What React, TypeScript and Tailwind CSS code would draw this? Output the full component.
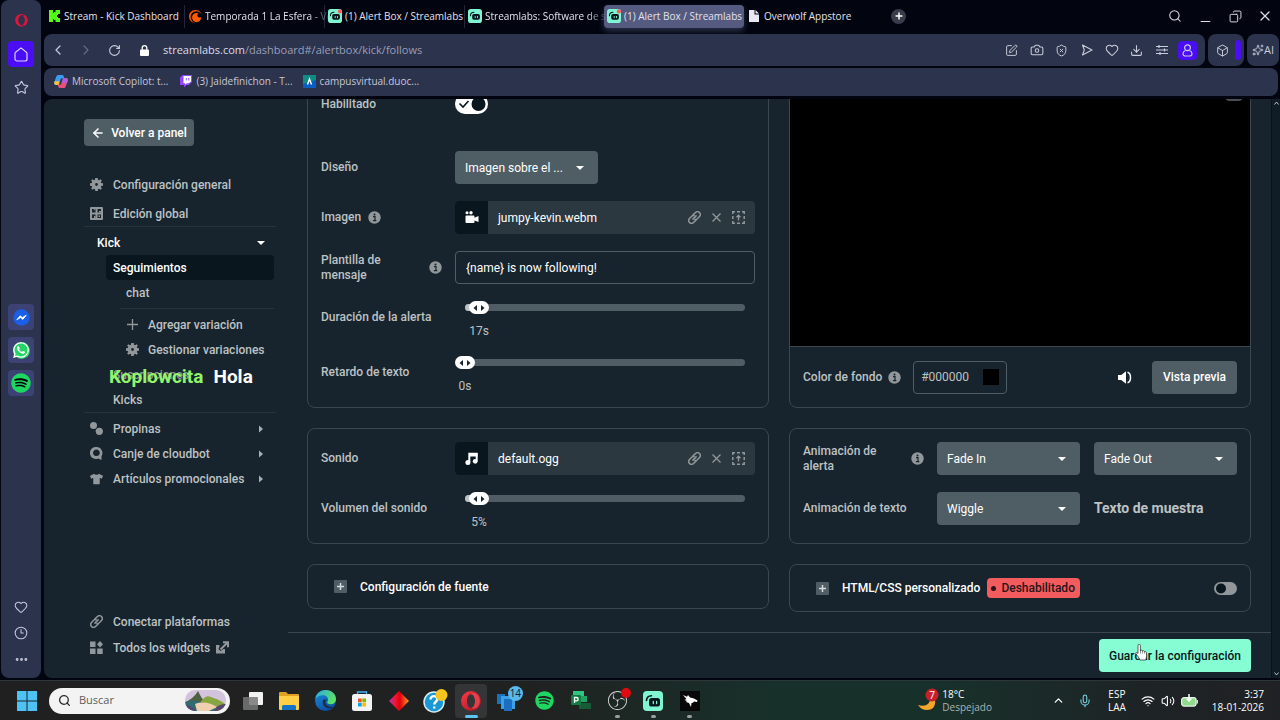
import { useState } from "react";
import type { ReactNode } from "react";
import {
  ArrowLeft, Box, Camera, ChevronLeft, ChevronRight, ChevronUp, Clock3, Copy, Download, Ellipsis,
  Heart, Mic, Minus, Plus, RotateCw, Search, ShieldX, Sparkles, SquarePen,
  Star, Volume2, Wifi, X,
} from "lucide-react";
import { FaOpera, FaSpotify, FaTshirt, FaWhatsapp } from "react-icons/fa";
import { SiCrunchyroll, SiObsstudio } from "react-icons/si";

/* ---------- drawings ---------- */

function StreamlabsLogo({ size, dot }: { size: number; dot?: boolean }) {
  return (
    <svg width={size} height={size} viewBox="0 0 20 20" className="shrink-0">
      <rect width="20" height="20" rx="4" fill="#80f5d2" />
      <path d="M3.500 9.500C3.600 6.500 5.500 4.800 8.500 4.700" fill="none" stroke="#09161d" strokeWidth="1.600" strokeLinecap="round" />
      <rect x="6" y="7" width="11" height="8.500" rx="2.600" fill="#09161d" />
      <path d="M10.300 10.500v2M13.600 10.500v2" stroke="#80f5d2" strokeWidth="1.300" strokeLinecap="round" />
      {dot && <circle cx="17" cy="3.500" r="3" fill="#ff5a5f" />}
    </svg>
  );
}

function KickLogo() {
  return (
    <svg width="11" height="12" viewBox="0 0 11 12" className="shrink-0">
      <path d="M0 0h4v3h1V2h1.500V0H11v4H9v1H8v2h1v1h2v4H6.500v-2H5V9H4v3H0z" fill="#53fc18" />
    </svg>
  );
}

function HomeIcon() {
  return (
    <svg width="14" height="15" viewBox="0 0 14 15" fill="none" stroke="currentColor" strokeWidth="1.200" strokeLinejoin="round">
      <path d="M7 .9 12.400 5.200a1.500 1.500 0 0 1 .6 1.200V12a2 2 0 0 1-2 2H3a2 2 0 0 1-2-2V6.400a1.500 1.500 0 0 1 .6-1.200z" />
    </svg>
  );
}

function PersonIcon() {
  return (
    <svg width="11" height="13" viewBox="0 0 11 13" fill="none" stroke="currentColor" strokeWidth="1.200">
      <circle cx="5.500" cy="3.800" r="2.900" />
      <path d="M3.500 6.500C1.800 7.200 1 8.500 1 9.800 1 11.300 2 12 3.300 12h4.400C9 12 10 11.300 10 9.800c0-1.300-.8-2.600-2.500-3.300" />
    </svg>
  );
}

function GearIcon() {
  return (
    <svg width="13" height="13" viewBox="0 0 16 16">
      <path
        fillRule="evenodd"
        fill="currentColor"
        d="M6.500 0h3l.4 2.200 1.200.5L13 1.400 14.600 3l-1.300 1.900.5 1.200 2.200.4v3l-2.200.4-.5 1.200 1.300 1.900-1.600 1.600-1.900-1.300-1.200.5L9.500 16h-3l-.4-2.200-1.200-.5L3 14.600 1.400 13l1.300-1.900-.5-1.200L0 9.500v-3l2.200-.4.5-1.200L1.400 3 3 1.400l1.900 1.300 1.200-.5zM8 6.300a1.700 1.700 0 1 0 0 3.400 1.700 1.700 0 0 0 0-3.400z"
      />
    </svg>
  );
}

function GlobalEditIcon() {
  return (
    <svg width="13" height="13" viewBox="0 0 13 13">
      <path
        fillRule="evenodd"
        fill="currentColor"
        d="M1 0h11a1 1 0 0 1 1 1v11a1 1 0 0 1-1 1H1a1 1 0 0 1-1-1V1a1 1 0 0 1 1-1zM2 2v3.500h3.500V2zM7.500 2v3.500H11V2zM2 7.500V11h3.500V7.500zM7.500 7.500V11H11V7.500z"
      />
      <path d="M3.500 2h1.500v1.500zM9 4h2v1.500H9zM4 9h1.500v2H4zM8.500 8.500H10V10H8.500z" fill="currentColor" />
    </svg>
  );
}

function CoinsIcon() {
  return (
    <svg width="13" height="13" viewBox="0 0 13 13">
      <circle cx="3.500" cy="3.500" r="3.500" fill="currentColor" />
      <circle cx="9.300" cy="9.300" r="3.600" fill="currentColor" />
    </svg>
  );
}

function CloudbotIcon() {
  return (
    <svg width="13" height="13" viewBox="0 0 13 13">
      <path fillRule="evenodd" fill="currentColor" d="M6.500 0a6 6 0 0 1 5 9.200V13L8.300 11.500A6 6 0 1 1 6.500 0zM6.400 2.600A3.300 3.300 0 0 0 4 8.200c.7.800 3.800 1 4.800 0a3.300 3.300 0 0 0-2.400-5.600z" />
    </svg>
  );
}

function LinkIcon() {
  return (
    <svg width="13" height="13" viewBox="0 0 13 13" fill="none" stroke="currentColor" strokeWidth="1.500" strokeLinecap="round">
      <path d="M4.900 8.100 8.100 4.900" />
      <path d="M5 3.900 7.500 1.500a2.830 2.830 0 0 1 4 4L9.300 7.700a2.700 2.700 0 0 1-2.300.7" />
      <path d="M8 9.100 5.500 11.500a2.830 2.830 0 0 1-4-4L3.700 5.300A2.700 2.700 0 0 1 6 4.600" />
    </svg>
  );
}

function WidgetsIcon() {
  return (
    <svg width="13" height="13" viewBox="0 0 13 13" fill="currentColor">
      <path d="M0 .5h5.500V6H0zM0 7.500h5.500V13H0zM7.200 7.500h5.500V13H7.200zM10 0l3 3.200-3 3.200-3-3.200z" />
    </svg>
  );
}

function ExternalIcon() {
  return (
    <svg width="13" height="13" viewBox="0 0 13 13">
      <path d="M0 4h3.500v1.500L2.500 8l2 2 3-2H9v4.500H0z" fill="currentColor" />
      <path d="M4.500 8.500 11 2M7 1.200h5v5" fill="none" stroke="currentColor" strokeWidth="2" />
    </svg>
  );
}

function UploadFrameIcon() {
  return (
    <svg width="13" height="13" viewBox="0 0 13 13" fill="none" stroke="currentColor" strokeWidth="1.500">
      <path d="M.8 3V.8H3M5 .8h3M10 .8h2.200V3M12.200 5v3M12.200 10v2.200H10M8 12.200H5M3 12.200H.8V10M.8 8V5" />
      <path d="M6.500 9.500v-5M4.500 6.200l2-2 2 2" strokeWidth="1.300" />
    </svg>
  );
}

function CameraReelIcon() {
  return (
    <svg width="14" height="13" viewBox="0 0 14 13" fill="#fff">
      <circle cx="2" cy="1.700" r="1.500" />
      <circle cx="6" cy="1.700" r="1.700" />
      <path d="M1.500 4.500h7a1 1 0 0 1 1 1v1.300L13.500 5v6l-4-1.500V11a1 1 0 0 1-1 1h-7a1 1 0 0 1-1-1V5.500a1 1 0 0 1 1-1z" />
    </svg>
  );
}

function MusicIcon() {
  return (
    <svg width="13" height="13" viewBox="0 0 13 13">
      <path d="M4.300 10V1.700h7.400V9" fill="none" stroke="#fff" strokeWidth="2" />
      <path d="M4 1h8.500v3.500H4z" fill="#fff" />
      <circle cx="2.900" cy="10.400" r="2.500" fill="#fff" />
      <circle cx="10.200" cy="9.300" r="2.400" fill="#fff" />
    </svg>
  );
}

function SpeakerIcon() {
  return (
    <svg width="14" height="13" viewBox="0 0 14 13">
      <path d="M0 4h3.200L8 .3v12.400L3.200 9H0z" fill="#fff" />
      <path d="M9.500 1.300c4 1 4 9.400 0 10.400" fill="none" stroke="#fff" strokeWidth="1.500" />
    </svg>
  );
}

function Caret({ dir, className = "" }: { dir: "down" | "right"; className?: string }) {
  return dir === "down" ? (
    <svg width="8" height="4" viewBox="0 0 8 4" className={className}><path d="M0 0h8L4 4z" fill="currentColor" /></svg>
  ) : (
    <svg width="4" height="8" viewBox="0 0 4 8" className={className}><path d="M0 .5v7L4 4z" fill="currentColor" /></svg>
  );
}

function InfoIcon() {
  return (
    <svg width="13" height="13" viewBox="0 0 13 13" className="shrink-0">
      <circle cx="6.500" cy="6.500" r="6.200" fill="#91979a" />
      <circle cx="6.500" cy="3.500" r="1" fill="#17242d" />
      <path d="M5 5.700h2v4M4.900 9.700h3.400" fill="none" stroke="#17242d" strokeWidth="1.200" />
    </svg>
  );
}

function PlusBox() {
  return (
    <svg width="13" height="13" viewBox="0 0 13 13" className="shrink-0">
      <rect width="13" height="13" rx="1" fill="#4f5e64" />
      <path d="M6.500 3v7M3 6.500h7" stroke="#d5dadc" strokeWidth="1.500" />
    </svg>
  );
}

/* ---------- browser chrome ---------- */

function OperaRail() {
  const apps: { name: string; icon: ReactNode }[] = [
    { name: "Messenger", icon: <svg width="17" height="17" viewBox="0 0 17 17"><circle cx="8.500" cy="8.500" r="8.200" fill="#1a5fe6" /><path d="m3.800 10.800 3.300-4 2.300 1.800 3.800-2.400-3.300 4.200-2.300-1.900z" fill="#fff" stroke="#fff" strokeWidth=".8" strokeLinejoin="round" /></svg> },
    { name: "WhatsApp", icon: <span className="flex size-[17px] items-center justify-center rounded-full bg-[#25d366]"><FaWhatsapp size={18} color="#fff" className="shrink-0" /></span> },
    { name: "Spotify", icon: <span className="flex size-[17px] items-center justify-center rounded-full bg-black"><FaSpotify size={20} color="#1ed760" className="shrink-0" /></span> },
  ];
  return (
    <aside className="ml-px flex w-10 shrink-0 flex-col items-center rounded-lg bg-[#2c334c] pb-[11px] pt-3.5 text-[#c5c8da]">
      <FaOpera size={13} color="#e0143c" />
      <button aria-label="Inicio" className="mt-3.5 flex size-[26px] items-center justify-center rounded bg-[#4a0df5] text-[#d9d2ff]">
        <HomeIcon />
      </button>
      <button aria-label="Favoritos" className="mt-[11px] flex size-[18px] items-center justify-center">
        <Star size={15} strokeWidth={1.8} />
      </button>
      <div className="mt-52 flex flex-col gap-[7px]">
        {apps.map((a) => (
          <button key={a.name} aria-label={a.name} className="flex size-[26px] items-center justify-center rounded bg-[#3d4274]">{a.icon}</button>
        ))}
      </div>
      <div className="mt-auto flex flex-col items-center gap-3">
        <button aria-label="Me gusta"><Heart size={14} strokeWidth={1.8} /></button>
        <button aria-label="Historial"><Clock3 size={14} strokeWidth={1.8} /></button>
        <button aria-label="Más"><Ellipsis size={15} strokeWidth={2.6} /></button>
      </div>
    </aside>
  );
}

const tabs: { title: string; icon: ReactNode; active?: boolean; fade?: boolean }[] = [
  { title: "Stream - Kick Dashboard", icon: <KickLogo /> },
  { title: "Temporada 1 La Esfera - Ve", icon: <SiCrunchyroll size={13} color="#ff5a00" className="shrink-0" />, fade: true },
  { title: "(1) Alert Box / Streamlabs", icon: <StreamlabsLogo size={14} dot /> },
  { title: "Streamlabs: Software de st", icon: <StreamlabsLogo size={14} />, fade: true },
  { title: "(1) Alert Box / Streamlabs", icon: <StreamlabsLogo size={14} dot />, active: true },
  {
    title: "Overwolf Appstore",
    icon: <svg width="10" height="12" viewBox="0 0 10 12" className="shrink-0"><path d="M0 0h5.500v4.500H10V12H0zM6.500 0 10 3.500H6.500z" fill="#e8e9f2" /></svg>,
  },
];

function TabStrip() {
  return (
    <div className="flex h-[34px] shrink-0 items-center pb-0.5">
      {tabs.map((t, i) => (
        <button
          key={i}
          className={
            "flex h-[23px] w-[140px] min-w-0 items-center gap-[3px] pl-[3px] text-left text-[10px] text-[#e2e3ec] " +
            (t.active ? "rounded bg-[#555a80] shadow-[0_3px_6px_#2c334c]" : i > 0 && i < 4 ? "border-l border-[#23263a]" : "")
          }
        >
          <span className="flex w-3.5 shrink-0 justify-center">{t.icon}</span>
          <span className={"whitespace-nowrap " + (t.fade ? "[mask-image:linear-gradient(to_right,#000_82%,transparent)]" : "")}>{t.title}</span>
        </button>
      ))}
      <button aria-label="Nueva pestaña" className="ml-[7px] flex size-[15px] items-center justify-center rounded-full bg-[#3a3c4b] text-white">
        <Plus size={10} strokeWidth={3.5} />
      </button>
      <div className="ml-auto flex text-[#d9dbe6]">
        <button aria-label="Buscar pestañas" className="flex w-[30px] items-center justify-center"><Search size={14} strokeWidth={1.8} /></button>
        <button aria-label="Minimizar" className="flex w-[30px] items-center justify-center pt-2.5"><Minus size={15} strokeWidth={1.8} /></button>
        <button aria-label="Restaurar" className="flex w-[30px] items-center justify-center"><Copy size={13} strokeWidth={1.8} className="-scale-x-100" /></button>
        <button aria-label="Cerrar" className="flex w-[30px] items-center justify-center"><X size={16} strokeWidth={1.8} /></button>
      </div>
    </div>
  );
}

function AddressBar() {
  const actions: { name: string; icon: ReactNode }[] = [
    { name: "Editar", icon: <SquarePen size={13} strokeWidth={1.8} /> },
    { name: "Captura", icon: <Camera size={14} strokeWidth={1.8} /> },
    { name: "Bloqueador", icon: <ShieldX size={13} strokeWidth={1.8} /> },
    {
      name: "Enviar",
      icon: (
        <svg width="12" height="12" viewBox="0 0 12 12" fill="none" stroke="currentColor" strokeWidth="1.100" strokeLinejoin="round">
          <path d="M1.500 1 11 6l-9.500 5L3.300 6z" />
        </svg>
      ),
    },
    { name: "Favorito", icon: <Heart size={14} strokeWidth={1.8} /> },
    { name: "Descargas", icon: <Download size={13} strokeWidth={2} /> },
    {
      name: "Ajustes",
      icon: (
        <svg width="12" height="12" viewBox="0 0 12 12" fill="none" stroke="currentColor" strokeWidth="1.200">
          <path d="M0 2.500h12M0 6h12M0 9.500h12M3 1v3M8.500 4.500v3M4 8v3" />
        </svg>
      ),
    },
  ];
  return (
    <div className="mr-px flex h-8 shrink-0 gap-[3px] text-[#c9ccdb]">
      <div className="flex min-w-0 flex-1 items-center rounded-lg bg-[#2c334c]">
        <button aria-label="Atrás" className="flex w-7 justify-center"><ChevronLeft size={16} strokeWidth={1.8} /></button>
        <button aria-label="Adelante" className="flex w-7 justify-center text-[#646a85]"><ChevronRight size={16} strokeWidth={1.8} /></button>
        <button aria-label="Recargar" className="flex w-7 justify-center"><RotateCw size={13} strokeWidth={2} /></button>
        <svg width="9" height="11" viewBox="0 0 9 11" className="ml-3 shrink-0">
          <path d="M2.200 5V3a2.300 2.300 0 0 1 4.600 0v2" fill="none" stroke="#fff" strokeWidth="1.300" />
          <rect y="4.500" width="9" height="6.500" rx="1" fill="#fff" />
        </svg>
        <a href="#follows" className="ml-3.5 min-w-0 flex-1 truncate text-[11px] text-[#9a9eb6]">
          <span className="text-[#dcdee9]">streamlabs.com</span>/dashboard#/alertbox/kick/follows
        </a>
        {actions.map((a) => (
          <button key={a.name} aria-label={a.name} className="flex w-[25px] justify-center">{a.icon}</button>
        ))}
        <button aria-label="Perfil" className="ml-1 mr-2 flex size-[19px] items-center justify-center rounded-sm bg-[#4a0df5]">
          <PersonIcon />
        </button>
      </div>
      <div className="flex w-9 items-center justify-between rounded-lg bg-[#2c334c] pl-2 pr-[3px]">
        <button aria-label="Extensiones"><Box size={13} strokeWidth={1.8} /></button>
        <span className="h-5 w-[6px] rounded-sm bg-[#4a0df5]" />
      </div>
      <button className="flex w-8 items-center justify-center rounded-lg bg-[#2c334c] text-[11px]">
        <Sparkles size={12} strokeWidth={1.8} className="shrink-0" />AI
      </button>
    </div>
  );
}

function BookmarkBar() {
  return (
    <nav className="mr-0.5 flex h-7 shrink-0 items-center rounded-lg bg-[#2c334c] pb-0.5 pl-2.5 text-[10px] text-[#c5c8d8]">
      <a href="#copilot" className="flex items-center gap-1">
        <svg width="14" height="13" viewBox="0 0 14 13">
          <path d="M4 0h5l1.500 3.500H7L4.800 10H2C0 10 0 8 .5 6.500L2.300 1.500Q2.800 0 4 0z" fill="#3a9bf0" />
          <path d="M.6 6.300h4.800L4.800 10H2C0 10 0 8 .6 6.300z" fill="#f2c53c" />
          <path d="M10 13H5l-1.500-3.500H7L9.200 3H12c2 0 2 2 1.500 3.500l-1.800 5Q11.200 13 10 13z" fill="#e8507a" />
          <path d="M9.200 3H12c2 0 2 2 1.500 3.500L13 8H7.500z" fill="#b45bd8" />
        </svg>
        Microsoft Copilot: t...
      </a>
      <a href="#twitch" className="ml-3 flex items-center gap-1">
        <svg width="12" height="13" viewBox="0 0 12 13">
          <path d="M2.500 0H12v7L8.800 10H6.500L4 12.500V10H0V2.500z" fill="#9146ff" />
          <path d="M3.500 1H11v5.500L9 8.300H6.800L5.200 9.800V8.300H3.500z" fill="#fff" />
          <path d="M6.300 3v2.500M8.800 3v2.500" stroke="#9146ff" strokeWidth="1" />
        </svg>
        (3) Jaidefinichon - T...
      </a>
      <a href="#campus" className="ml-2.5 flex items-center gap-1">
        <svg width="13" height="13" viewBox="0 0 13 13">
          <rect width="13" height="13" fill="#0a5dc2" />
          <path d="M0 0h13v5L0 9z" fill="#15a06a" opacity=".7" />
          <path d="M4.500 9.500 6.500 4l2 5.500" fill="none" stroke="#fff" strokeWidth="1.400" />
        </svg>
        campusvirtual.duoc...
      </a>
    </nav>
  );
}

/* ---------- dashboard sidebar ---------- */

function NavLink({ icon, children, caret }: { icon: ReactNode; children: ReactNode; caret?: boolean }) {
  return (
    <a href="#nav" className="flex h-[25px] items-center whitespace-nowrap pl-1.5">
      <span className="flex w-[13px] justify-center text-[#91979a]">{icon}</span>
      <span className="ml-2.5">{children}</span>
      {caret && <Caret dir="right" className="ml-auto mr-[13px] text-[#a9b0b3]" />}
    </a>
  );
}

function Sidebar() {
  return (
    <aside className="flex w-[244px] shrink-0 flex-col pb-[18px] pl-10 pr-3 pt-5 text-[12px] font-medium text-[#bdc2c4]">
      <button className="flex h-[27px] w-[110px] items-center justify-center gap-1.5 whitespace-nowrap rounded bg-[#4f5e64] text-white">
        <ArrowLeft size={14} strokeWidth={2.6} />Volver a panel
      </button>
      <nav className="mt-[25px]">
        <div className="flex h-14 flex-col justify-between border-b border-[#27343c] pt-px">
          <NavLink icon={<GearIcon />}>Configuración general</NavLink>
          <NavLink icon={<GlobalEditIcon />}>Edición global</NavLink>
        </div>
        <button className="flex h-7 w-full items-center justify-between pl-[13px] pr-[11px] pt-1 text-white">
          Kick<Caret dir="down" />
        </button>
        <div className="relative border-b border-[#27343c] pr-0.5">
          <a href="#seguimientos" className="ml-[22px] flex h-[25px] items-center rounded-sm bg-[#09161d] pl-[7px] text-white">Seguimientos</a>
          <a href="#chat" className="ml-[42px] flex h-[25px] items-center">chat</a>
          <div className="mb-[3px] ml-9 mt-[3px] border-t border-[#27343c]" />
          <a href="#agregar" className="ml-[42px] flex h-[25px] items-center gap-[9px] whitespace-nowrap">
            <svg width="13" height="13" viewBox="0 0 13 13" className="text-[#91979a]"><path d="M6.500 1v11M1 6.500h11" stroke="currentColor" strokeWidth="1.300" /></svg>
            Agregar variación
          </a>
          <a href="#gestionar" className="ml-[42px] flex h-[25px] items-center gap-[9px] whitespace-nowrap">
            <span className="text-[#91979a]"><GearIcon /></span>Gestionar variaciones
          </a>
          <a href="#suscripciones" className="ml-[29px] flex h-[25px] items-center text-[#8b9396]">Suscripciones</a>
          <a href="#kicks" className="ml-[29px] flex h-[25px] items-center">Kicks</a>
          <p className="absolute bottom-[23px] left-[25px] flex gap-2.5 whitespace-nowrap text-[19px] font-bold leading-6 text-white">
            <span className="text-[#8ff56b]">Koplowcita</span>Hola
          </p>
        </div>
        <div className="pt-[3px]">
          <NavLink icon={<CoinsIcon />} caret>Propinas</NavLink>
          <NavLink icon={<CloudbotIcon />} caret>Canje de cloudbot</NavLink>
          <NavLink icon={<FaTshirt size={14} />} caret>Artículos promocionales</NavLink>
        </div>
      </nav>
      <div className="mt-auto flex flex-col gap-px">
        <NavLink icon={<LinkIcon />}>Conectar plataformas</NavLink>
        <NavLink icon={<WidgetsIcon />}>
          <span className="flex items-center gap-1.5">Todos los widgets<span className="text-[#91979a]"><ExternalIcon /></span></span>
        </NavLink>
      </div>
    </aside>
  );
}

/* ---------- form pieces ---------- */

function Row({ label, htmlFor, info, children }: { label: string; htmlFor?: string; info?: "near" | "far"; children: ReactNode }) {
  return (
    <div className="flex items-center">
      <div className={"flex w-[134px] shrink-0 items-center pr-[13px] " + (info === "far" ? "justify-between" : "gap-[7px]")}>
        <label htmlFor={htmlFor} className={info === "far" ? "w-20 leading-[15px]" : "whitespace-nowrap leading-[15px]"}>{label}</label>
        {info && <InfoIcon />}
      </div>
      <div className="flex min-w-0 flex-1 gap-3.5">{children}</div>
    </div>
  );
}

function Dropdown({ id, label, options }: { id: string; label?: string; options: string[] }) {
  return (
    <div className="relative w-[143px]">
      <select id={id} aria-label={label} className="h-[33px] w-full appearance-none rounded bg-[#4f5e64] pl-2.5 pr-7 font-normal text-white">
        {options.map((o) => <option key={o}>{o}</option>)}
      </select>
      <Caret dir="down" className="pointer-events-none absolute right-3.5 top-[15px] text-white" />
    </div>
  );
}

function FilePicker({ icon, name }: { icon: ReactNode; name: string }) {
  return (
    <div className="flex h-[33px] flex-1 items-center overflow-hidden rounded bg-[#2b383f] font-normal text-white">
      <span className="flex h-full w-[33px] items-center justify-center bg-[#09161d]">{icon}</span>
      <span className="ml-2.5 flex-1">{name}</span>
      <div className="mr-2.5 flex items-center gap-[9px] text-[#91979a]">
        <button aria-label="Enlace"><LinkIcon /></button>
        <button aria-label="Quitar">
          <svg width="13" height="13" viewBox="0 0 13 13"><path d="m2.500 2.500 8 8M10.500 2.500l-8 8" stroke="currentColor" strokeWidth="1.300" /></svg>
        </button>
        <button aria-label="Subir"><UploadFrameIcon /></button>
      </div>
    </div>
  );
}

function SliderRow({ id, label, initial, max, unit }: { id: string; label: string; initial: number; max: number; unit: string }) {
  const [value, setValue] = useState(initial);
  const left = `${(value / max) * 100}%`;
  return (
    <div className="flex h-[38px] items-start">
      <label htmlFor={id} className="w-[134px] shrink-0 whitespace-nowrap leading-8">{label}</label>
      <div className="relative mx-2.5 h-full flex-1">
        <div className="mt-[3px] h-[7px] overflow-hidden rounded-full bg-[#4f5e64]">
          <div className="h-full bg-[#bdc2c4]" style={{ width: left }} />
        </div>
        <div className="absolute top-0 flex h-[13px] w-5 -translate-x-1/2 items-center justify-center rounded-full bg-white text-[#17242d]" style={{ left }}>
          <svg width="12" height="6" viewBox="0 0 12 6"><path d="M4 0v6L.5 3zM8 0v6l3.500-3z" fill="currentColor" /></svg>
        </div>
        <output htmlFor={id} className="absolute top-[22px] -translate-x-1/2 font-normal leading-4" style={{ left }}>{value}{unit}</output>
        <input
          id={id}
          type="range"
          min={0}
          max={max}
          value={value}
          onChange={(e) => setValue(Number(e.target.value))}
          className="absolute inset-x-0 top-0 h-[13px] w-full opacity-0"
        />
      </div>
    </div>
  );
}

const card = "rounded-lg border border-[#3a474f]";

function Settings() {
  return (
    <div className="-mt-6 flex gap-5">
      <div className="flex min-w-0 flex-1 flex-col gap-5">
        <section className={card + " flex flex-col gap-[17px] px-[13px] pb-[13px] pt-3"}>
          <div className="h-[46px]">
            <Row label="Habilitado" htmlFor="enabled">
              <label className="relative flex h-8 items-center">
                <input id="enabled" type="checkbox" defaultChecked className="peer absolute inset-0 opacity-0" />
                <svg width="33" height="20" viewBox="0 0 33 20">
                  <rect width="33" height="20" rx="10" fill="#fff" />
                  <circle cx="23.500" cy="10" r="7" fill="#09161d" />
                  <path d="m4.500 9.500 3.500 3.500 5.500-6" fill="none" stroke="#09161d" strokeWidth="1.600" />
                </svg>
              </label>
            </Row>
          </div>
          <Row label="Diseño" htmlFor="layout"><Dropdown id="layout" options={["Imagen sobre el ..."]} /></Row>
          <Row label="Imagen" info="near"><FilePicker icon={<CameraReelIcon />} name="jumpy-kevin.webm" /></Row>
          <Row label="Plantilla de mensaje" htmlFor="template" info="far">
            <input id="template" defaultValue="{name} is now following!" className="h-[33px] w-full rounded border border-[#4f5e64] bg-transparent px-2.5 font-normal text-white" />
          </Row>
          <SliderRow id="duration" label="Duración de la alerta" initial={17} max={340} unit="s" />
          <SliderRow id="delay" label="Retardo de texto" initial={0} max={60} unit="s" />
        </section>
        <section className={card + " flex flex-col gap-[17px] p-[13px]"}>
          <Row label="Sonido"><FilePicker icon={<MusicIcon />} name="default.ogg" /></Row>
          <SliderRow id="volume" label="Volumen del sonido" initial={5} max={100} unit="%" />
        </section>
        <section className={card}>
          <button className="flex h-[43px] w-full items-center gap-[13px] pl-[26px] text-white"><PlusBox />Configuración de fuente</button>
        </section>
      </div>
      <div className="flex min-w-0 flex-1 flex-col gap-5">
        <section className={card + " overflow-hidden"}>
          <div className="relative h-[271px] border-b border-[#3a474f] bg-black">
            <span className="absolute right-[7px] top-4 h-[9px] w-[18px] rounded-full bg-[#4a4f55]" />
          </div>
          <div className="flex h-[60px] items-center px-[13px]">
            <label htmlFor="bg" className="mr-1.5 whitespace-nowrap">Color de fondo</label>
            <InfoIcon />
            <div className="ml-3 flex h-[33px] w-[94px] items-center justify-between rounded border border-[#4f5e64] px-[7px]">
              <input id="bg" defaultValue="#000000" className="w-14 bg-transparent font-normal" />
              <span className="size-4 bg-black" />
            </div>
            <button aria-label="Sonido" className="ml-auto"><SpeakerIcon /></button>
            <button className="ml-5 h-[33px] w-[85px] whitespace-nowrap rounded bg-[#4f5e64] text-white">Vista previa</button>
          </div>
        </section>
        <section className={card + " flex flex-col gap-[17px] p-[13px] pb-[18px]"}>
          <Row label="Animación de alerta" htmlFor="anim-in" info="far">
            <Dropdown id="anim-in" options={["Fade In"]} />
            <Dropdown id="anim-out" label="Animación de salida" options={["Fade Out"]} />
          </Row>
          <Row label="Animación de texto" htmlFor="anim-text">
            <Dropdown id="anim-text" options={["Wiggle"]} />
            <span className="flex items-center text-[14px] font-bold">Texto de muestra</span>
          </Row>
        </section>
        <section className={card + " flex h-12 items-center pl-[26px] pr-[13px]"}>
          <button className="flex items-center gap-[13px] whitespace-nowrap text-white"><PlusBox />HTML/CSS personalizado</button>
          <span className="ml-[7px] flex h-5 items-center gap-[5px] rounded bg-[#f25c5e] pl-1 pr-[5px] text-[#2a1519]">
            <span className="size-[5px] rounded-full bg-[#2a1519]" />Deshabilitado
          </span>
          <label className="relative ml-auto">
            <input type="checkbox" aria-label="HTML/CSS personalizado" className="absolute inset-0 opacity-0" />
            <svg width="23" height="13" viewBox="0 0 23 13">
              <rect width="23" height="13" rx="6.500" fill="#91979a" />
              <circle cx="7" cy="6.500" r="5" fill="#09161d" />
            </svg>
          </label>
        </section>
      </div>
    </div>
  );
}

function Dashboard() {
  return (
    <div className="mt-[3px] flex min-h-0 flex-1 overflow-hidden rounded-tl-lg rounded-bl-lg bg-[#18242d] font-['Roboto',sans-serif]">
      <Sidebar />
      <main className="flex min-w-0 flex-1 flex-col text-[12px] font-medium text-[#bdc2c4]">
        <div className="min-h-0 flex-1 overflow-hidden pl-[19px] pr-5">
          <Settings />
        </div>
        <footer className="flex h-[46px] shrink-0 items-center justify-end border-t border-[#3a474f] pr-5">
          <button className="relative h-[33px] w-[152px] whitespace-nowrap rounded bg-[#86fdd3] text-[#09161d]">
            Guardar la configuración
            <svg width="13" height="17" viewBox="0 0 13 17" className="absolute left-9 top-[5px]">
              <path d="M3 1.500a1.200 1.200 0 0 1 2.400 0V7l.4-.6c.8-.6 1.700-.1 1.800.6.700-.6 1.700-.2 1.900.6.800-.4 1.900 0 1.900 1.100l.3 3.300c0 1.500-.8 2.300-.9 4H4.800C4.700 14.500 2.600 12 1 9.800c-.8-1.200.8-1.900 2-.4z" fill="#fff" stroke="#222" strokeWidth=".7" />
              <path d="M7.500 7v2.500M9.500 7.600v2M5.500 7v2.500" stroke="#444" strokeWidth=".6" />
            </svg>
          </button>
        </footer>
      </main>
      <div className="flex w-[9px] shrink-0 flex-col items-center justify-between border-l border-[#0a1219] bg-[#101d27] py-0.5 text-[#b5bcc4]">
        <svg width="5" height="4" viewBox="0 0 5 4"><path d="M.5 3.500l2-2.500 2 2.500" fill="none" stroke="currentColor" /></svg>
        <svg width="5" height="4" viewBox="0 0 5 4"><path d="M.5.500l2 2.500 2-2.500" fill="none" stroke="currentColor" /></svg>
      </div>
    </div>
  );
}

/* ---------- Windows taskbar ---------- */

function EdgeLogo() {
  return (
    <svg width="21" height="21" viewBox="0 0 20 20">
      <defs>
        <linearGradient id="edgeA" x1="0" y1="0" x2="1" y2="0.400"><stop offset="0" stopColor="#2aa7e8" /><stop offset="1" stopColor="#5be06a" /></linearGradient>
        <linearGradient id="edgeB" x1="0" y1="0" x2="0.600" y2="1"><stop offset="0" stopColor="#1b8fdc" /><stop offset="1" stopColor="#0c4ea2" /></linearGradient>
      </defs>
      <circle cx="10" cy="10" r="10" fill="url(#edgeB)" />
      <path d="M.2 8.500C1 3.500 5 0 10 0c6 0 10 4 10 8.500 0 3.500-2.500 5-5 5-2 0-3.500-.8-3.500-1.600 0-.6 1-1 1-2.600C12.500 7 10.500 5 7.500 5 4 5 1.200 7 .2 8.500z" fill="url(#edgeA)" />
      <path d="M8 9c-2 4 1 8.500 6 8.500 1.800 0 3-.5 4-1.300-1 .3-7 .5-8-4C9.700 10.500 11 9.500 11 9z" fill="#202020" opacity=".75" />
    </svg>
  );
}

function OperaLogo() {
  return (
    <svg width="20" height="20" viewBox="0 0 20 20">
      <defs>
        <linearGradient id="operaRing" x1="0" y1="0" x2="1" y2="1"><stop offset="0" stopColor="#ff3a48" /><stop offset="1" stopColor="#a01020" /></linearGradient>
      </defs>
      <path fillRule="evenodd" fill="url(#operaRing)" d="M10 0a10 10 0 1 1 0 20 10 10 0 0 1 0-20zM10 3.200C7.500 3.200 6 6.200 6 10s1.500 6.800 4 6.800 4-3 4-6.800-1.500-6.800-4-6.800z" />
      <path d="M10 3.200c2.500-2 5.500-.7 7 1.300a9.800 9.800 0 0 1 0 11c-1.500 2-4.500 3.300-7 1.300 2.500 0 4-3 4-6.800s-1.500-6.800-4-6.800z" fill="#f0505a" opacity=".7" />
    </svg>
  );
}

const taskApps: { name: string; icon: ReactNode; state?: "active" | "open" }[] = [
  { name: "Vista de tareas", icon: <svg width="20" height="18" viewBox="0 0 20 18"><rect x="6" y="0" width="14" height="13" rx="1" fill="#f2f2f2" /><rect x="0" y="5" width="15" height="13" rx="1" fill="#777" opacity=".85" /></svg> },
  { name: "Explorador", icon: <svg width="20" height="18" viewBox="0 0 20 18"><path d="M0 1a1 1 0 0 1 1-1h6l2 2h10a1 1 0 0 1 1 1v4H0z" fill="#e0a020" /><rect y="4" width="20" height="14" rx="1" fill="#ffd045" /><path d="M3 18v-3.500a1.500 1.500 0 0 1 1.500-1.500h11a1.500 1.500 0 0 1 1.500 1.500V18z" fill="#1373c4" /></svg> },
  { name: "Edge", icon: <EdgeLogo /> },
  { name: "Store", icon: <svg width="20" height="20" viewBox="0 0 20 20"><path d="M5.500 5V1h9v4" fill="none" stroke="#3fb4ee" strokeWidth="1.300" /><rect y="3" width="20" height="17" rx="2.500" fill="#f3f3f3" /><path d="M6 7.500h3.700v3.700H6z" fill="#f25022" /><path d="M10.300 7.500H14v3.700h-3.700z" fill="#7fba00" /><path d="M6 11.800h3.700v3.700H6z" fill="#00a4ef" /><path d="M10.300 11.800H14v3.700h-3.700z" fill="#ffb900" /></svg> },
  { name: "Rombo", icon: <svg width="20" height="20" viewBox="0 0 20 20"><defs><linearGradient id="rombo"><stop offset="0" stopColor="#b030c0" /><stop offset=".3" stopColor="#f01830" /><stop offset=".55" stopColor="#e00010" /><stop offset="1" stopColor="#ff9a20" /></linearGradient></defs><path d="m10 0 10 10-10 10L0 10z" fill="url(#rombo)" /></svg> },
  { name: "Ayuda", icon: <svg width="25" height="24" viewBox="0 0 25 24"><circle cx="11" cy="13" r="10" fill="#1b98d4" stroke="#d9eef8" strokeWidth="1.500" /><path d="M7.500 10.500c0-5 7.500-4 6.800 0-.3 2-3 2.500-3 5M11.200 17.500v2" fill="none" stroke="#fff" strokeWidth="2.400" /><circle cx="18.500" cy="6" r="6" fill="#f7c51e" /></svg> },
  { name: "Opera", icon: <OperaLogo />, state: "active" },
  { name: "Mensajes", icon: <span className="relative"><svg width="22" height="20" viewBox="0 0 22 20"><path d="M0 3h8v10H0z" fill="#1c72b8" /><path d="M4 5h14v13H4z" fill="#3ba0e8" /><path d="M7 8h8v12H7z" fill="#1a6fc0" /></svg><span className="absolute -right-1 -top-[5px] flex size-[15px] items-center justify-center rounded-full bg-[#58b9ee] text-[10px] leading-none text-[#0b2030]">14</span></span> },
  { name: "Spotify", icon: <FaSpotify size={19} color="#1ed760" /> },
  { name: "Project", icon: <svg width="20" height="19" viewBox="0 0 20 19"><path d="M2 0h11v5H2z" fill="#33c481" /><path d="M7 5h9v6H7z" fill="#21a366" /><path d="M8 12h12v6H8z" fill="#185c37" /><rect y="4" width="10" height="10" rx="1" fill="#107c41" /><path d="M3.500 12V6.500h2a1.600 1.600 0 0 1 0 3.300h-2" fill="none" stroke="#fff" strokeWidth="1.300" /></svg> },
  { name: "OBS", icon: <span className="relative"><SiObsstudio size={19} color="#d8d8d8" /><span className="absolute -right-1 -top-[3px] size-2.5 rounded-full bg-[#e00b12]" /></span>, state: "open" },
  { name: "Streamlabs", icon: <StreamlabsLogo size={20} />, state: "open" },
  { name: "Overwolf", icon: <svg width="20" height="20" viewBox="0 0 20 20"><rect width="20" height="20" fill="#080808" /><path d="m3 4 4 1.800L8 4l2 2.500 4 1 3.500 2-.5 1.500-3-.5-1 1.200-1.500.3-.5 4-2-4-3-1 1-1L4.500 9l2-1z" fill="#fff" /></svg>, state: "open" },
];

function Taskbar() {
  return (
    <footer className="flex h-10 shrink-0 items-center border-t border-[#2d3739] bg-[linear-gradient(to_right,#202020_0%,#202221_42%,#18302a_60%,#18302a_74%,#1e2325_90%,#202124_100%)] text-[10px] text-white">
      <button aria-label="Inicio" className="ml-[17px]">
        <svg width="20" height="20" viewBox="0 0 20 20" className="text-[#4cc2f5]" fill="currentColor"><path d="M0 0h9.500v9.500H0zM10.500 0H20v9.500h-9.500zM0 10.500h9.500V20H0zM10.500 10.500H20V20h-9.500z" /></svg>
      </button>
      <label className="ml-3 flex h-[26px] w-[181px] items-center rounded-full bg-[#f3f3f3] pl-[9px] pr-1 text-[#2b2b2b]">
        <Search size={13} strokeWidth={2.4} className="shrink-0" />
        <input placeholder="Buscar" aria-label="Buscar" className="ml-2 min-w-0 flex-1 bg-transparent text-[11px] placeholder:text-[#5c5c5c]" />
        <svg width="41" height="21" viewBox="0 0 41 21" className="shrink-0">
          <clipPath id="scene"><rect width="41" height="21" rx="10" /></clipPath>
          <g clipPath="url(#scene)">
            <rect width="41" height="21" fill="#d3c3dd" />
            <path d="M0 13C5 9 9 8 13 1c3 6 4 8 8 11z" fill="#4d6140" />
            <path d="M14 14c5-7 8-9 12-7 5 2 10 3 15 8v6H14z" fill="#87a63f" />
            <path d="M0 12c8-3 15 0 22 2l12 7H0z" fill="#2f6b70" />
            <path d="M10 14c8-3 16-1 22 3l-8 4H12z" fill="#f0cfae" />
            <path d="M0 15c4 0 9 3 11 6H0zM29 21c2-5 6-7 12-7v7z" fill="#58456e" />
          </g>
        </svg>
      </label>
      <div className="ml-[7px] flex w-[469px] items-center justify-between">
        {taskApps.map((a) => (
          <button key={a.name} aria-label={a.name} className={"relative flex h-[34px] w-8 items-center justify-center " + (a.state === "active" ? "rounded bg-[#333536]" : "")}>
            {a.icon}
            {a.state && <span className={"absolute bottom-0 h-[3px] rounded-full " + (a.state === "active" ? "w-[13px] bg-[#5fc4f2]" : "w-[5px] bg-[#9a9f9e]")} />}
          </button>
        ))}
      </div>
      <div className="ml-auto flex items-center pr-4">
        <svg width="22" height="26" viewBox="0 0 22 26">
          <path d="M18 12c1 7-3 10-8 10-4 0-7-2-9-5 8 2 12-1 12-6z" fill="#f6a52c" />
          <circle cx="15" cy="7" r="6.500" fill="#c8202a" />
          <text x="15" y="10.500" textAnchor="middle" fontSize="10" fill="#fff">7</text>
        </svg>
        <div className="ml-[3px] leading-[13px]">
          <p>18°C</p>
          <p className="text-[#a9b3b0]">Despejado</p>
        </div>
        <ChevronUp size={13} strokeWidth={2.4} className="ml-[60px]" />
        <Mic size={14} strokeWidth={2} className="ml-[13px] text-[#6fc3d4]" />
        <div className="ml-4 text-center leading-[13px]"><p>ESP</p><p>LAA</p></div>
        <Wifi size={14} strokeWidth={2} className="ml-[15px]" />
        <Volume2 size={14} strokeWidth={1.8} className="ml-1.5" />
        <svg width="17" height="13" viewBox="0 0 17 13" className="ml-1.5">
          <rect x=".6" y="3.600" width="14.500" height="8.500" rx="2.500" fill="#8fdc8c" stroke="#e9f5e9" strokeWidth="1.200" />
          <path d="M16.300 6v3.500" stroke="#e9f5e9" strokeWidth="1.200" />
          <path d="M8 0v7M5.500 4.500 8 7l2.500-2.500" stroke="#fff" strokeWidth="1.500" fill="none" />
        </svg>
        <div className="ml-3.5 text-right leading-[13px]"><p>3:37</p><p>18-01-2026</p></div>
      </div>
    </footer>
  );
}

export default function App() {
  return (
    <div className="flex h-screen flex-col overflow-hidden bg-[#02040f] font-['Open_Sans',sans-serif]">
      <div className="flex min-h-0 flex-1 gap-[3px] pb-[2px]">
        <OperaRail />
        <div className="flex min-w-0 flex-1 flex-col">
          <TabStrip />
          <AddressBar />
          <div className="h-0.5 shrink-0" />
          <BookmarkBar />
          <Dashboard />
        </div>
      </div>
      <Taskbar />
    </div>
  );
}
